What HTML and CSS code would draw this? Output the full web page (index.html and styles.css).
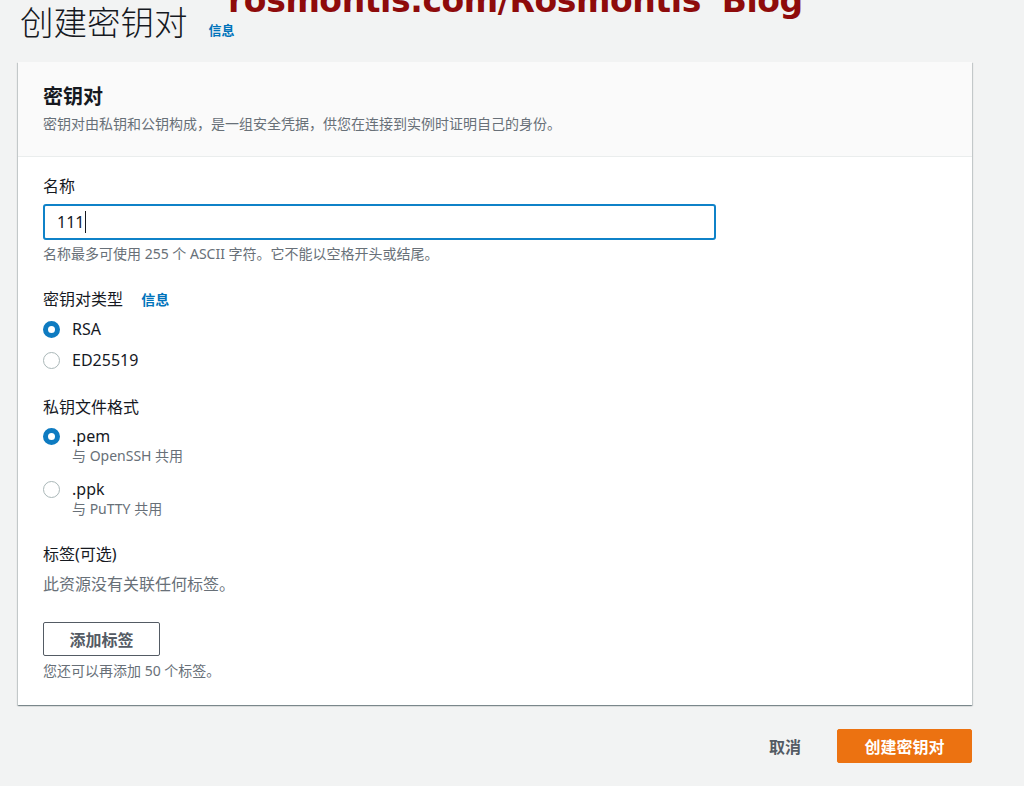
FILE: index.html
```html
<!DOCTYPE html>
<html lang="zh-CN">
<head>
  <meta charset="UTF-8">
  <meta name="viewport" content="width=device-width, initial-scale=1.0">
  <title>创建密钥对</title>
  <link rel="stylesheet" href="styles.css">
</head>
<body>
  <div class="watermark">rosmontis.com/Rosmontis' Blog</div>

  <header class="page-header">
    <h1>创建密钥对</h1>
    <a href="#" class="info-link">信息</a>
  </header>

  <section class="panel">
    <div class="panel-header">
      <h2>密钥对</h2>
      <p class="panel-desc">密钥对由私钥和公钥构成，是一组安全凭据，供您在连接到实例时证明自己的身份。</p>
    </div>

    <div class="panel-body">
      <div class="field">
        <label class="field-label" for="name">名称</label>
        <div class="input-box">
          <span class="input-value">111</span><span class="caret"></span>
        </div>
        <p class="hint">名称最多可使用 255 个 ASCII 字符。它不能以空格开头或结尾。</p>
      </div>

      <div class="field">
        <div class="field-label">密钥对类型 <a href="#" class="info-link">信息</a></div>
        <div class="radio checked"><span class="dot"></span><span class="radio-text">RSA</span></div>
        <div class="radio"><span class="dot"></span><span class="radio-text">ED25519</span></div>
      </div>

      <div class="field">
        <div class="field-label">私钥文件格式</div>
        <div class="radio checked">
          <span class="dot"></span>
          <div>
            <div class="radio-text">.pem</div>
            <div class="radio-desc">与 OpenSSH 共用</div>
          </div>
        </div>
        <div class="radio">
          <span class="dot"></span>
          <div>
            <div class="radio-text">.ppk</div>
            <div class="radio-desc">与 PuTTY 共用</div>
          </div>
        </div>
      </div>

      <div class="field tags">
        <div class="field-label">标签(可选)</div>
        <p class="empty">此资源没有关联任何标签。</p>
        <button class="btn-normal">添加标签</button>
        <p class="hint">您还可以再添加 50 个标签。</p>
      </div>
    </div>
  </section>

  <div class="actions">
    <a href="#" class="btn-link">取消</a>
    <button class="btn-primary">创建密钥对</button>
  </div>
</body>
</html>
```

FILE: styles.css
```css
:root {
  --page-bg: #f2f3f3;
  --text: #16191f;
  --muted: #687078;
  --blue: #0073bb;
  --orange: #ec7211;
  --line: #eaeded;
}

* {
  margin: 0;
  padding: 0;
  box-sizing: border-box;
}

body {
  background: var(--page-bg);
  color: var(--text);
  font-family: 'Noto Sans', 'Noto Sans CJK SC', sans-serif;
  width: 1024px;
  height: 786px;
  overflow: hidden;
  position: relative;
  padding: 0 52px 0 18px;
}

.watermark {
  position: absolute;
  top: -16px;
  left: 228px;
  font-family: 'DejaVu Sans', sans-serif;
  font-weight: 700;
  font-size: 33px;
  line-height: 34px;
  color: #8e0b0b;
  white-space: nowrap;
  letter-spacing: -0.4px;
}

.page-header {
  display: flex;
  align-items: baseline;
  gap: 21px;
  height: 62px;
}

.page-header h1 {
  font-weight: 300;
  font-size: 33.5px;
  line-height: 44px;
  margin-left: 2px;
  color: #16191f;
}

.info-link {
  color: var(--blue);
  font-size: 13px;
  font-weight: 700;
  text-decoration: none;
}

.panel {
  background: #fff;
  box-shadow: 0 1px 1px 0 rgba(0, 28, 36, 0.3), 1px 1px 1px 0 rgba(0, 28, 36, 0.15), -1px 1px 1px 0 rgba(0, 28, 36, 0.15);
  width: 954px;
}

.panel-header {
  background: #fafafa;
  border-bottom: 1px solid var(--line);
  padding: 21px 25px 0;
  height: 95px;
}

.panel-header h2 {
  font-size: 20px;
  font-weight: 700;
  line-height: 28px;
}

.panel-desc {
  font-size: 14px;
  color: var(--muted);
  line-height: 20px;
  margin-top: 3px;
}

.panel-body {
  padding: 17px 25px 25px;
}

.field {
  margin-bottom: 24px;
}

.field:last-child {
  margin-bottom: 0;
}

.field-label {
  display: block;
  font-size: 16px;
  line-height: 24px;
  color: #16191f;
  margin-bottom: 6px;
}

.field-label .info-link {
  font-size: 14px;
  margin-left: 14px;
}

.input-box {
  width: 673px;
  height: 36px;
  border: 2px solid #0f82c8;
  border-radius: 3px;
  display: flex;
  align-items: center;
  padding-left: 12px;
  font-size: 16px;
}

.caret {
  display: inline-block;
  width: 1px;
  height: 22px;
  background: #16191f;
  margin-left: 1px;
}

.hint {
  font-size: 14px;
  color: var(--muted);
  line-height: 18px;
  margin-top: 5px;
}

.radio {
  display: flex;
  align-items: flex-start;
  gap: 12px;
  margin-bottom: 9px;
}

.radio .dot {
  width: 17px;
  height: 17px;
  border-radius: 50%;
  border: 1px solid #aab7b8;
  background: #fff;
  margin-top: 3px;
  flex-shrink: 0;
}

.radio.checked .dot {
  border: 5px solid #0e7bc1;
}

.radio-text {
  font-size: 16px;
  line-height: 22px;
}

.radio-desc {
  font-size: 14px;
  color: var(--muted);
  line-height: 18px;
}

.field > .radio:last-child {
  margin-bottom: 0;
}

.radio:has(.radio-desc) {
  margin-bottom: 13px;
}

.tags .empty {
  font-size: 16px;
  color: var(--muted);
  line-height: 24px;
  margin-bottom: 26px;
}

.tags .hint {
  margin-top: 6px;
}

.btn-normal {
  display: block;
  width: 117px;
  height: 34px;
  border: 1px solid #545b64;
  border-radius: 2px;
  background: #fff;
  color: #545b64;
  font-family: inherit;
  font-weight: 700;
  font-size: 16px;
}

.actions {
  display: flex;
  justify-content: flex-end;
  align-items: center;
  width: 954px;
  margin-top: 24px;
  gap: 36px;
}

.btn-link {
  color: #545b64;
  font-weight: 700;
  font-size: 16px;
  text-decoration: none;
}

.btn-primary {
  width: 135px;
  height: 34px;
  background: var(--orange);
  border: 1px solid var(--orange);
  border-radius: 2px;
  color: #fff;
  font-family: inherit;
  font-weight: 700;
  font-size: 16px;
}
```
